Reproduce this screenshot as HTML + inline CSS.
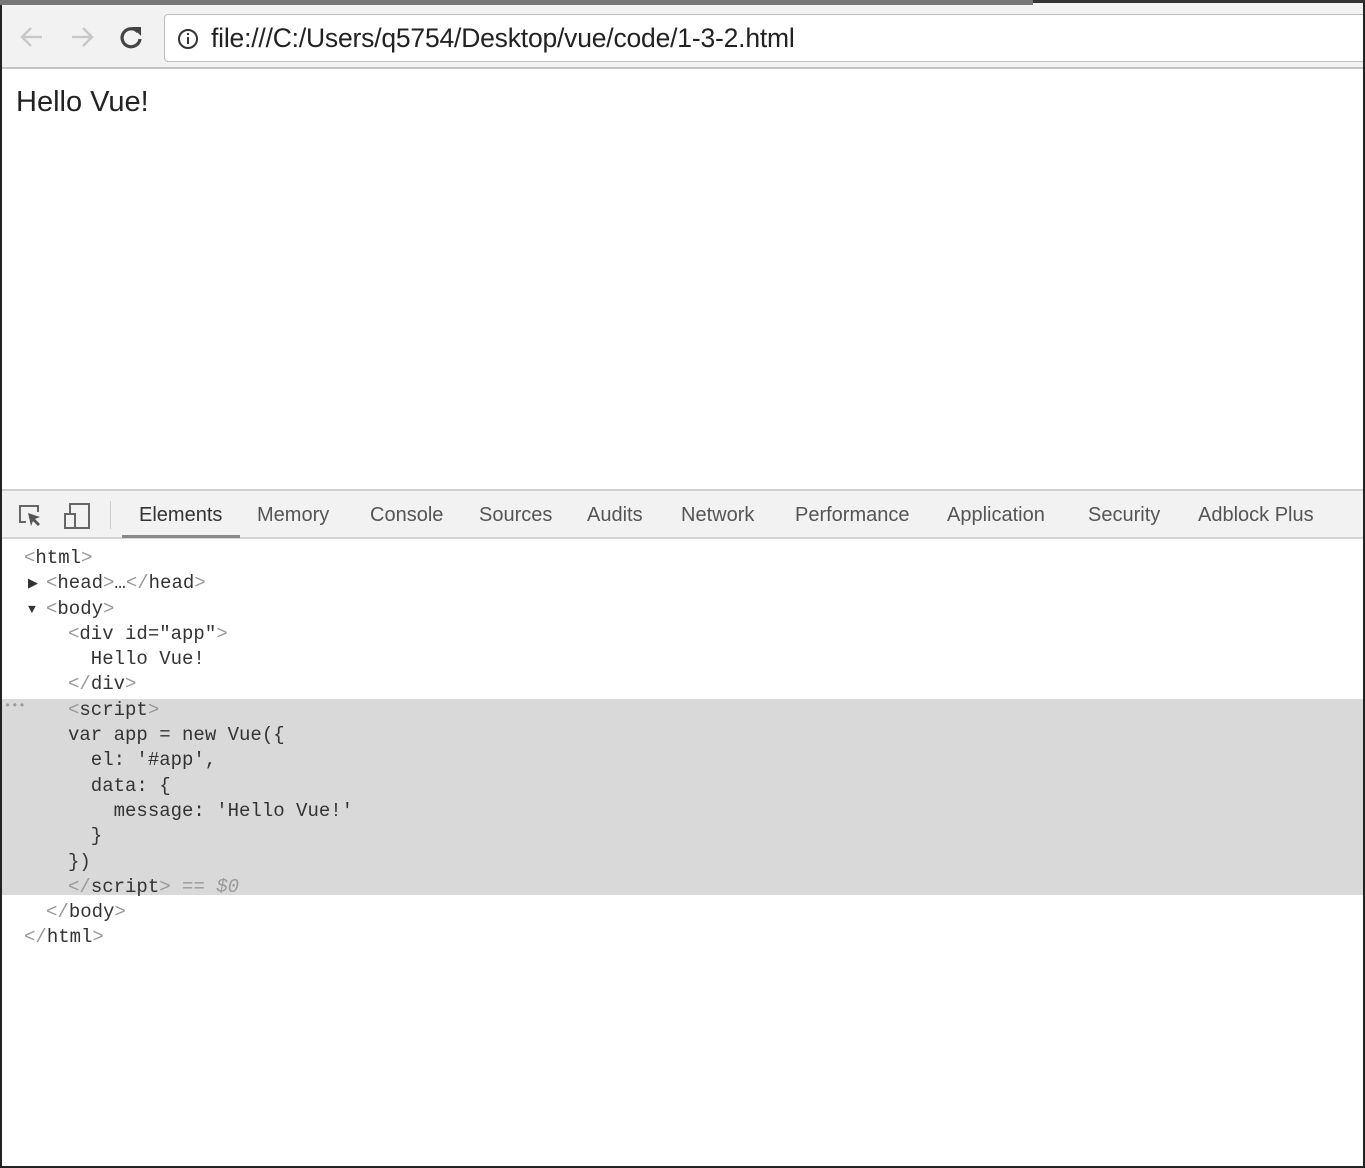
<!DOCTYPE html>
<html><head><meta charset="utf-8"><style>
*{margin:0;padding:0;box-sizing:border-box}
body{width:1365px;height:1168px;background:#fff;position:relative;overflow:hidden;font-family:"Liberation Sans",sans-serif}
.frame{position:absolute;left:0;top:0;width:1365px;height:1168px;border:2px solid #222;border-top:3px solid #333;pointer-events:none;z-index:10}
.load{position:absolute;left:0;top:0;width:1033px;height:5px;background:#777;z-index:11}
.tb{position:absolute;left:0;top:3px;width:1365px;height:66px;background:#f2f2f2;border-bottom:2px solid #c4c4c4}
.url{position:absolute;left:164px;top:11px;width:1220px;height:48px;background:#fff;border:1px solid #bdbdbd;border-radius:4px}
.url span{position:absolute;left:46px;top:8px;font-size:26.5px;color:#222;letter-spacing:-0.2px}
.hello{position:absolute;left:16px;top:86px;font-size:29px;color:#222}
.dt{position:absolute;left:0;top:489px;width:1365px;height:50px;background:#f2f2f2;border-top:2px solid #cfcfcf;border-bottom:2px solid #d4d4d4}
.tab{position:absolute;top:13px;font-size:20px;color:#555}
.sel{position:absolute;left:122px;top:44px;width:118px;height:3px;background:#888}
.code{position:absolute;left:0;top:546px;width:1365px;font-family:"Liberation Mono",monospace;font-size:19px;color:#333}
.ln{height:25.3px;line-height:25.3px;white-space:pre;padding-left:24px;position:relative}
.g{color:#999}
.tri{position:absolute;left:28px;font-size:13px}
.dots{position:absolute;left:4px;top:-4px;font-size:12px;color:#999}
.hl{position:absolute;left:0;top:699px;width:1365px;height:196px;background:#d9d9d9}
</style></head><body>
<div class="hl"></div>
<div class="load"></div>
<div class="tb">
<svg style="position:absolute;left:18px;top:20px" width="28" height="28" viewBox="0 0 28 28"><path d="M24 14H5M13 5l-9 9 9 9" stroke="#c8c8c8" stroke-width="2.5" fill="none"/></svg>
<svg style="position:absolute;left:68px;top:20px" width="28" height="28" viewBox="0 0 28 28"><path d="M4 14h19M15 5l9 9-9 9" stroke="#c8c8c8" stroke-width="2.5" fill="none"/></svg>
<svg style="position:absolute;left:117px;top:20px" width="28" height="28" viewBox="0 0 28 28"><path d="M21 9A9 9 0 1 0 23 16" stroke="#444" stroke-width="3.2" fill="none"/><path d="M15 4h9v9z" fill="#444"/></svg>
<div class="url"><svg style="position:absolute;left:12px;top:13px" width="22" height="22" viewBox="0 0 22 22"><circle cx="11" cy="11" r="9" stroke="#333" stroke-width="2" fill="none"/><rect x="10" y="9" width="2" height="7" fill="#333"/><rect x="10" y="5" width="2" height="2" fill="#333"/></svg><span>file:///C:/Users/q5754/Desktop/vue/code/1-3-2.html</span></div>
</div>
<div class="hello">Hello Vue!</div>
<div class="dt">
<svg style="position:absolute;left:17px;top:12px" width="28" height="26" viewBox="0 0 28 26"><path d="M9 19H3V3h18v6" stroke="#666" stroke-width="2" fill="none"/><path d="M11 10l12 4-5 2 5 5-2 2-5-5-2 5z" fill="#555"/></svg>
<svg style="position:absolute;left:62px;top:10px" width="30" height="30" viewBox="0 0 30 30"><rect x="8" y="3" width="19" height="24" stroke="#666" stroke-width="2" fill="none"/><rect x="3" y="13" width="10" height="14" stroke="#666" stroke-width="2" fill="#f2f2f2"/></svg>
<div style="position:absolute;left:110px;top:10px;width:1px;height:28px;background:#ccc"></div>
<span class="tab" style="left:139px;color:#333">Elements</span>
<span class="tab" style="left:257px">Memory</span>
<span class="tab" style="left:370px">Console</span>
<span class="tab" style="left:479px">Sources</span>
<span class="tab" style="left:587px">Audits</span>
<span class="tab" style="left:681px">Network</span>
<span class="tab" style="left:795px">Performance</span>
<span class="tab" style="left:947px">Application</span>
<span class="tab" style="left:1088px">Security</span>
<span class="tab" style="left:1198px">Adblock Plus</span>
<div class="sel"></div>
</div>
<div class="code">
<div class="ln"><span class="g">&lt;</span>html<span class="g">&gt;</span></div>
<div class="ln" style="padding-left:46px"><span class="tri">▶</span><span class="g">&lt;</span>head<span class="g">&gt;</span>…<span class="g">&lt;/</span>head<span class="g">&gt;</span></div>
<div class="ln" style="padding-left:46px"><span class="tri">▼</span><span class="g">&lt;</span>body<span class="g">&gt;</span></div>
<div class="ln" style="padding-left:68px"><span class="g">&lt;</span>div id="app"<span class="g">&gt;</span></div>
<div class="ln" style="padding-left:68px">  Hello Vue!</div>
<div class="ln" style="padding-left:68px"><span class="g">&lt;/</span>div<span class="g">&gt;</span></div>
<div class="ln" style="padding-left:68px"><span class="dots">•••</span><span class="g">&lt;</span>script<span class="g">&gt;</span></div>
<div class="ln" style="padding-left:68px">var app = new Vue({</div>
<div class="ln" style="padding-left:68px">  el: '#app',</div>
<div class="ln" style="padding-left:68px">  data: {</div>
<div class="ln" style="padding-left:68px">    message: 'Hello Vue!'</div>
<div class="ln" style="padding-left:68px">  }</div>
<div class="ln" style="padding-left:68px">})</div>
<div class="ln" style="padding-left:68px"><span class="g">&lt;/</span>script<span class="g">&gt; <i>== $0</i></span></div>
<div class="ln" style="padding-left:46px"><span class="g">&lt;/</span>body<span class="g">&gt;</span></div>
<div class="ln" style="padding-left:24px"><span class="g">&lt;/</span>html<span class="g">&gt;</span></div>
</div>
<div class="frame"></div>
</body></html>
